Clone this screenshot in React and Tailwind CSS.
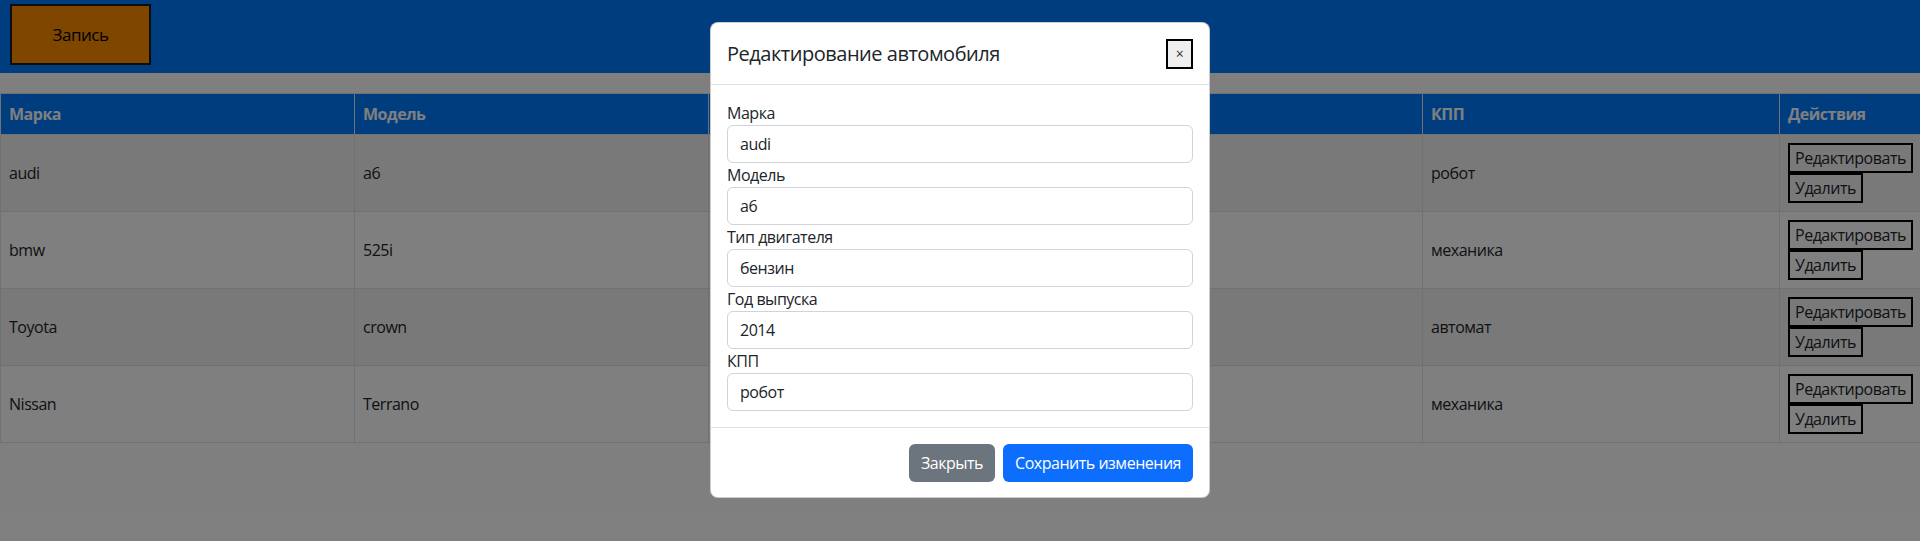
import React from "react";

const rows = [
  { make: "audi", model: "a6", engine: "бензин", year: "2014", gear: "робот" },
  { make: "bmw", model: "525i", engine: "бензин", year: "2010", gear: "механика" },
  { make: "Toyota", model: "crown", engine: "бензин", year: "2008", gear: "автомат" },
  { make: "Nissan", model: "Terrano", engine: "дизель", year: "2016", gear: "механика" },
];

const fields = [
  { label: "Марка", value: "audi" },
  { label: "Модель", value: "a6" },
  { label: "Тип двигателя", value: "бензин" },
  { label: "Год выпуска", value: "2014" },
  { label: "КПП", value: "робот" },
];

export default function App() {
  return (
    <div className="relative w-[1920px] h-[541px] overflow-hidden bg-white font-['Open_Sans','Noto_Sans',sans-serif] tracking-[-0.03em] text-[16px] leading-[24px] text-[#212529]">
      <div className="h-[73px] bg-[#007bff] pl-[10px] pt-[4px]">
        <button className="w-[141px] h-[61px] bg-[#ff8c00] border-2 border-[#1a1a1a] text-[17px] text-black">
          Запись
        </button>
      </div>
      <div className="h-[20px]" />
      <table className="w-[1920px] table-fixed border-collapse">
        <colgroup>
          <col className="w-[354px]" />
          <col className="w-[354px]" />
          <col className="w-[356px]" />
          <col className="w-[358px]" />
          <col className="w-[357px]" />
          <col className="w-[141px]" />
        </colgroup>
        <thead>
          <tr className="bg-[#007bff] text-white">
            {["Марка", "Модель", "Тип двигателя", "Год выпуска", "КПП", "Действия"].map((h) => (
              <th key={h} className="border border-[#dee2e6] px-[8px] py-[8px] text-left font-bold">
                {h}
              </th>
            ))}
          </tr>
        </thead>
        <tbody>
          {rows.map((r, i) => (
            <tr key={r.make} className={i % 2 === 0 ? "bg-[#f2f2f2]" : "bg-white"}>
              <td className="border border-[#dee2e6] px-[8px] align-middle">{r.make}</td>
              <td className="border border-[#dee2e6] px-[8px] align-middle">{r.model}</td>
              <td className="border border-[#dee2e6] px-[8px] align-middle">{r.engine}</td>
              <td className="border border-[#dee2e6] px-[8px] align-middle">{r.year}</td>
              <td className="border border-[#dee2e6] px-[8px] align-middle">{r.gear}</td>
              <td className="border border-[#dee2e6] px-[8px] py-[8px] align-middle">
                <div className="flex flex-col items-start">
                  <button className="h-[30px] px-[5px] border-2 border-black bg-transparent text-[16px] leading-[24px] whitespace-nowrap">
                    Редактировать
                  </button>
                  <button className="h-[30px] px-[5px] border-2 border-black bg-transparent text-[16px] leading-[24px] whitespace-nowrap">
                    Удалить
                  </button>
                </div>
              </td>
            </tr>
          ))}
        </tbody>
      </table>

      <div className="absolute inset-0 bg-black/50" />

      <div className="absolute left-1/2 top-[22px] -translate-x-1/2 w-[500px] bg-white border border-black/20 rounded-[8px]">
        <div className="flex items-center justify-between px-[16px] h-[62px] border-b border-[#dee2e6]">
          <h5 className="text-[20px] leading-[30px] font-medium text-[#212529]">Редактирование автомобиля</h5>
          <button className="w-[27px] h-[30px] bg-[#efefef] border-2 border-black text-[14px] leading-none text-[#333]">
            ×
          </button>
        </div>
        <div className="p-[16px]">
          {fields.map((f) => (
            <div key={f.label}>
              <label className="block h-[24px] text-[16px] leading-[24px] text-[#212529]">{f.label}</label>
              <div className="h-[38px] border border-[#ced4da] rounded-[6px] px-[12px] flex items-center text-[16px] text-[#212529]">
                {f.value}
              </div>
            </div>
          ))}
        </div>
        <div className="flex justify-end items-center gap-[8px] px-[16px] h-[70px] border-t border-[#dee2e6]">
          <button className="h-[38px] px-[12px] rounded-[6px] bg-[#6c757d] text-white text-[16px]">Закрыть</button>
          <button className="h-[38px] px-[12px] rounded-[6px] bg-[#0d6efd] text-white text-[16px]">Сохранить изменения</button>
        </div>
      </div>
    </div>
  );
}
